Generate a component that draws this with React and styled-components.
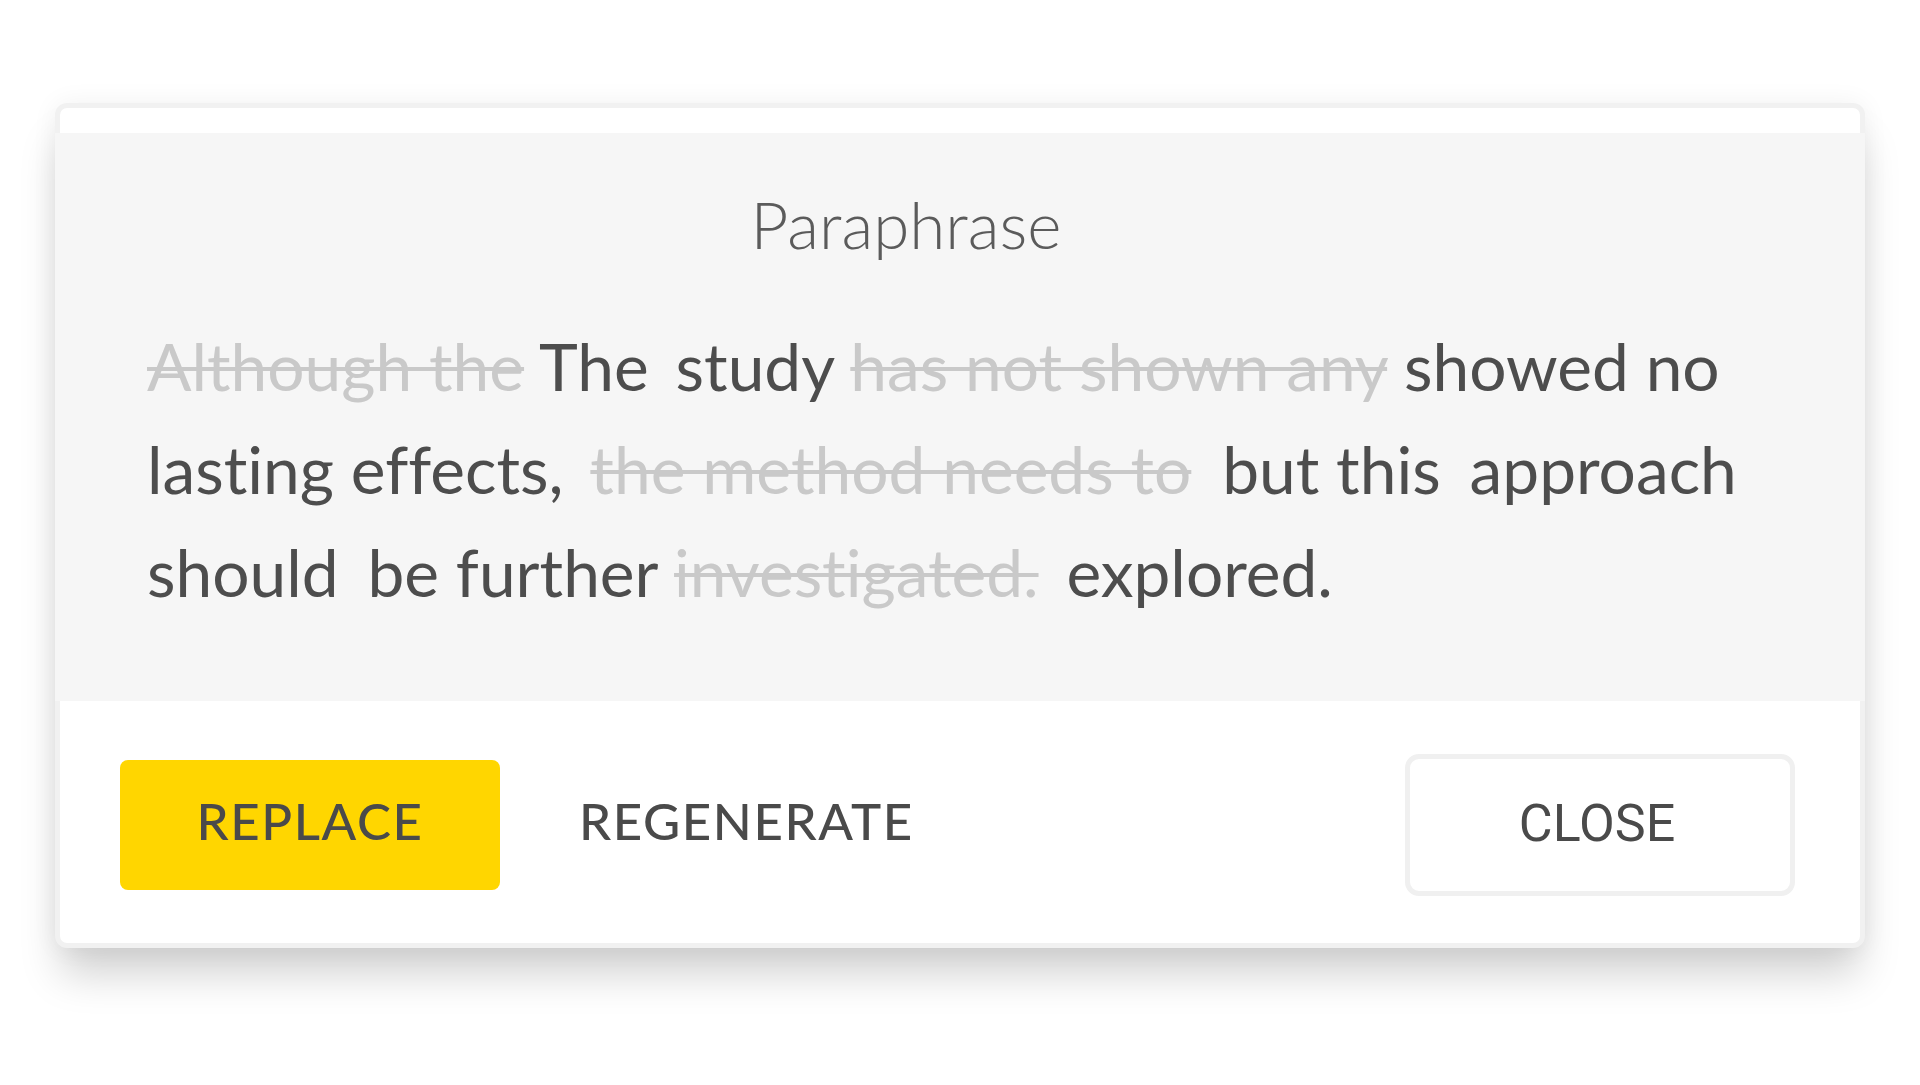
import React from 'react';
import styled, { createGlobalStyle } from 'styled-components';

const GlobalStyle = createGlobalStyle`
  html, body {
    margin: 0;
    padding: 0;
    background: #ffffff;
  }
  body {
    font-family: Lato, "Noto Sans", sans-serif;
  }
`;

const Page = styled.div`
  width: 1920px;
  height: 1085px;
  box-sizing: border-box;
  padding: 103px 55px 0;
  overflow: hidden;
`;

const Card = styled.div`
  background: #ffffff;
  border: 5px solid #f1f1f1;
  border-radius: 12px;
  box-shadow: 0 32px 42px -6px rgba(0, 0, 0, 0.18), 0 0 26px rgba(0, 0, 0, 0.06);
`;

const TopStrip = styled.div`
  height: 25px;
`;

const Body = styled.div`
  background: #f6f6f6;
  margin: 0 -5px;
  padding: 59px 92px 78px;
`;

const Title = styled.h2`
  margin: 0 0 58px;
  padding-right: 108px;
  text-align: center;
  font-family: Lato, sans-serif;
  font-weight: 300;
  font-size: 65.5px;
  line-height: 64px;
  color: #5b5b5b;
`;

const Paragraph = styled.p`
  margin: 0;
  font-family: Lato, sans-serif;
  font-size: 65.8px;
  line-height: 103px;
  font-variant-ligatures: none;
  color: #4d4d4d;
`;

const Token = styled.span`
  color: ${(p) => (p.$deleted ? '#c9c9c9' : '#4d4d4d')};
  text-decoration: ${(p) => (p.$deleted ? 'line-through' : 'none')};
  text-decoration-thickness: 4px;
  text-decoration-color: #c9c9c9;
  margin-right: ${(p) => p.$extra || 0}px;
`;

const Footer = styled.div`
  display: flex;
  align-items: center;
  padding: 53px 65px 47px 60px;
`;

const PrimaryButton = styled.button`
  width: 380px;
  height: 130px;
  padding: 0 0 10px;
  border: none;
  border-radius: 8px;
  background: #ffd600;
  color: #4a4a4a;
  font-family: Lato, sans-serif;
  font-weight: 500;
  font-size: 51px;
  letter-spacing: 1.6px;
  cursor: pointer;
`;

const TextButton = styled.button`
  margin-left: 79px;
  padding: 0 0 10px;
  border: none;
  background: transparent;
  color: #4a4a4a;
  font-family: Lato, sans-serif;
  font-weight: 500;
  font-size: 51px;
  letter-spacing: 1.6px;
  cursor: pointer;
`;

const OutlineButton = styled.button`
  margin-left: auto;
  width: 390px;
  height: 142px;
  box-sizing: border-box;
  padding: 0 6px 4px 0;
  border: 5px solid #f0f0f0;
  border-radius: 14px;
  background: #ffffff;
  color: #4a4a4a;
  font-family: Roboto, "Liberation Sans", sans-serif;
  font-weight: 400;
  font-size: 52px;
  cursor: pointer;
`;

const tokens = [
  { text: 'Although the', deleted: true },
  { text: 'The', extra: 10 },
  { text: 'study' },
  { text: 'has not shown any', deleted: true },
  { text: 'showed no' },
  { text: 'lasting effects,', extra: 10 },
  { text: 'the method needs to', deleted: true, extra: 14 },
  { text: 'but this', extra: 12 },
  { text: 'approach' },
  { text: 'should', extra: 12 },
  { text: 'be further' },
  { text: 'investigated.', deleted: true, extra: 11 },
  { text: 'explored.' },
];

export default function App() {
  return (
    <>
      <GlobalStyle />
      <Page>
        <Card>
          <TopStrip />
          <Body>
            <Title>Paraphrase</Title>
            <Paragraph>
              {tokens.map((t, i) => (
                <React.Fragment key={i}>
                  <Token $deleted={t.deleted} $extra={t.extra}>{t.text}</Token>
                  {i < tokens.length - 1 ? ' ' : ''}
                </React.Fragment>
              ))}
            </Paragraph>
          </Body>
          <Footer>
            <PrimaryButton>REPLACE</PrimaryButton>
            <TextButton>REGENERATE</TextButton>
            <OutlineButton>CLOSE</OutlineButton>
          </Footer>
        </Card>
      </Page>
    </>
  );
}
